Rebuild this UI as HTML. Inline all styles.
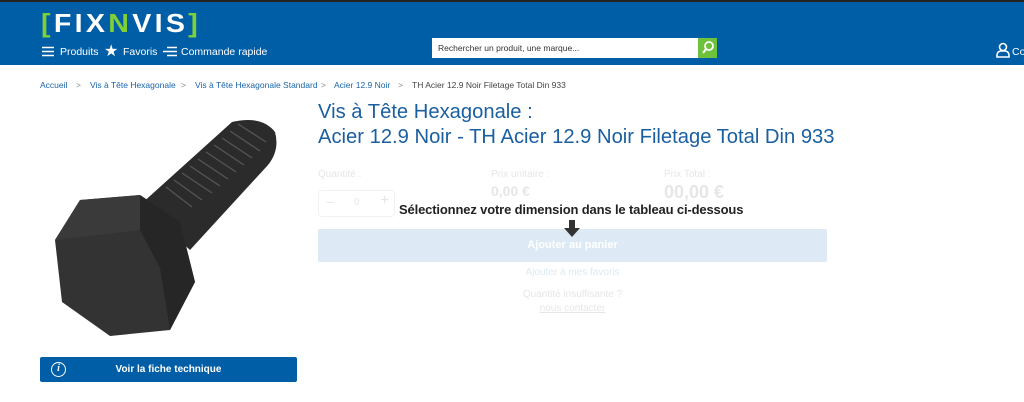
<!DOCTYPE html>
<html><head><meta charset="utf-8"><style>
*{margin:0;padding:0;box-sizing:border-box}
body{width:1024px;height:402px;overflow:hidden;background:#fff;font-family:"Liberation Sans",sans-serif;position:relative}
.a{position:absolute;white-space:nowrap}
.hdr{position:absolute;left:0;top:0;width:1024px;height:65px;background:#005ea6;border-top:2px solid #222}
.nav{color:#fff;font-size:10.5px;top:46px}
.bc{font-size:8.5px;color:#1a64a8;top:80px}
.gr{color:#e6e6e6}
</style></head><body>
<div class="hdr"></div>
<div class="a" style="left:41px;top:8px;font-size:26px;font-weight:bold;letter-spacing:3px;color:#fff;transform:scaleX(1.1);transform-origin:left"><span style="color:#7ed036">[</span>FIX<span style="color:#7ed036">N</span>VIS<span style="color:#7ed036">]</span></div>
<svg class="a" style="left:42px;top:46px" width="12" height="11"><path d="M0 1.5h12M0 5.5h12M0 9.5h12" stroke="#fff" stroke-width="1.6"/></svg>
<div class="a nav" style="left:60px">Produits</div>
<div class="a nav" style="left:104px;top:41px;font-size:16px">★</div>
<div class="a nav" style="left:123px">Favoris</div>
<svg class="a" style="left:163px;top:46px" width="14" height="12"><path d="M4 1.5h10M0 5.5h14M4 9.5h10" stroke="#fff" stroke-width="1.4"/></svg>
<div class="a nav" style="left:181px">Commande rapide</div>
<div class="a" style="left:432px;top:38px;width:266px;height:20px;background:#fff;font-size:8.5px;padding:5px 6px;color:#333">Rechercher un produit, une marque...</div>
<div class="a" style="left:698px;top:38px;width:19px;height:20px;background:#6cc23a"></div>
<svg class="a" style="left:701px;top:40px" width="14" height="15"><circle cx="8" cy="6" r="4" fill="none" stroke="#fff" stroke-width="1.8"/><path d="M5 9l-3 4" stroke="#fff" stroke-width="2"/></svg>
<svg class="a" style="left:996px;top:42px" width="14" height="16"><circle cx="7" cy="5" r="3.5" fill="none" stroke="#fff" stroke-width="1.6"/><path d="M1 15v-2a4 4 0 0 1 4-4h4a4 4 0 0 1 4 4v2z" fill="none" stroke="#fff" stroke-width="1.6"/></svg>
<div class="a nav" style="left:1012px">Co</div>
<div class="a bc" style="left:40px">Accueil</div>
<div class="a bc" style="left:76px;color:#888">&gt;</div>
<div class="a bc" style="left:90px">Vis à Tête Hexagonale</div>
<div class="a bc" style="left:181px;color:#888">&gt;</div>
<div class="a bc" style="left:195px">Vis à Tête Hexagonale Standard</div>
<div class="a bc" style="left:321px;color:#888">&gt;</div>
<div class="a bc" style="left:334px">Acier 12.9 Noir</div>
<div class="a bc" style="left:398px;color:#888">&gt;</div>
<div class="a bc" style="left:412px;color:#444">TH Acier 12.9 Noir Filetage Total Din 933</div>
<div class="a" style="left:318px;top:100px;font-size:20.2px;color:#1a5fa0;line-height:25px">Vis à Tête Hexagonale :<br>Acier 12.9 Noir - TH Acier 12.9 Noir Filetage Total Din 933</div>
<svg class="a" style="left:0;top:100px" width="300" height="250">
<g transform="translate(0,-100)">
<path d="M140 205 L232 122 Q262 115 275 132 Q280 150 268 165 L190 250 Z" fill="#2b2b2b"/>
<g stroke="#555" stroke-width="1.3">
<path d="M238 124l28 18M230 131l30 20M222 138l30 20M214 145l30 20M206 152l30 20M198 159l30 20M190 166l30 20M182 173l30 20M174 180l28 20M166 187l26 20"/></g>
<path d="M55 240 L80 200 L140 195 L180 222 L195 282 L170 330 L110 336 L62 302 Z" fill="#333"/>
<path d="M140 195 L180 222 L195 282 L170 330 L160 268 L140 230 Z" fill="#262626"/>
<path d="M55 240 L80 200 L140 195 L140 230 Z" fill="#3a3a3a"/>
</g></svg>
<div class="a" style="left:40px;top:357px;width:257px;height:25px;background:#005ea6;border-radius:2px;color:#fff;font-weight:bold;font-size:10px;text-align:center;line-height:25px">Voir la fiche technique</div>
<div class="a" style="left:51px;top:362px;width:15px;height:15px;border:1.5px solid #fff;border-radius:50%;color:#fff;font:italic bold 10px 'Liberation Serif',serif;text-align:center;line-height:12px">i</div>
<div class="a gr" style="left:318px;top:169px;font-size:10px">Quantité :</div>
<div class="a gr" style="left:491px;top:169px;font-size:10px">Prix unitaire :</div>
<div class="a gr" style="left:664px;top:169px;font-size:10px">Prix Total :</div>
<div class="a gr" style="left:491px;top:183px;font-size:14px;font-weight:bold">0,00 €</div>
<div class="a gr" style="left:664px;top:182px;font-size:18px;font-weight:bold">00,00 €</div>
<div class="a" style="left:318px;top:190px;width:77px;height:27px;border:1px solid #f2f2f2;border-radius:4px"></div>
<div class="a gr" style="left:326px;top:194px;font-size:14px">−</div>
<div class="a gr" style="left:354px;top:197px;font-size:10px">0</div>
<div class="a gr" style="left:380px;top:192px;font-size:16px">+</div>
<div class="a" style="left:399px;top:202px;font-size:13px;font-weight:bold;color:#222;letter-spacing:-0.15px">Sélectionnez votre dimension dans le tableau ci-dessous</div>
<div class="a" style="left:318px;top:229px;width:509px;height:33px;background:#dde9f4;border-radius:2px;color:#fff;font-weight:bold;font-size:11px;text-align:center;line-height:33px">Ajouter au panier</div>
<svg class="a" style="left:564px;top:220px" width="16" height="17"><path d="M5 0h6v8h5l-8 9-8-9h5z" fill="#333"/></svg>
<div class="a" style="left:318px;top:267px;width:509px;text-align:center;font-size:10px;color:#dde9f4">Ajouter à mes favoris</div>
<div class="a gr" style="left:318px;top:289px;width:509px;text-align:center;font-size:10px">Quantité insuffisante ?</div>
<div class="a gr" style="left:318px;top:303px;width:509px;text-align:center;font-size:10px;text-decoration:underline">nous contacter</div>
</body></html>
